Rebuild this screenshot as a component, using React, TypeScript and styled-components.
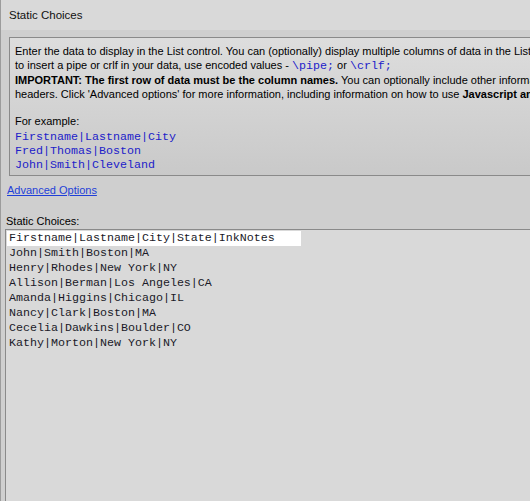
import React from 'react';
import styled, { createGlobalStyle } from 'styled-components';

const GlobalStyle = createGlobalStyle`
  html, body {
    margin: 0;
    padding: 0;
    background: #d9d9d9;
    overflow: hidden;
  }
`;

const exampleRows = ['Firstname|Lastname|City', 'Fred|Thomas|Boston', 'John|Smith|Cleveland'];

const choices = [
  'John|Smith|Boston|MA',
  'Henry|Rhodes|New York|NY',
  'Allison|Berman|Los Angeles|CA',
  'Amanda|Higgins|Chicago|IL',
  'Nancy|Clark|Boston|MA',
  'Cecelia|Dawkins|Boulder|CO',
  'Kathy|Morton|New York|NY',
];

export default function App() {
  return (
    <>
      <GlobalStyle />
      <Frame>
        <TitleBar>Static Choices</TitleBar>
        <Body>
          <InfoBox>
            <Line>
              Enter the data to display in the List control. You can (optionally) display multiple
              columns of data in the List. If you need
            </Line>
            <Line>
              to insert a pipe or crlf in your data, use encoded values - <Code>\pipe;</Code> or{' '}
              <Code>\crlf;</Code>
            </Line>
            <Important>
              <Line>
                <b>IMPORTANT: The first row of data must be the column names.</b> You can optionally
                include other information in the column
              </Line>
              <Line>
                headers. Click 'Advanced options' for more information, including information on how to
                use <b>Javascript and</b>
              </Line>
            </Important>
            <Spacer />
            <Line>For example:</Line>
            <ExampleList>
              {exampleRows.map((row) => (
                <CodeLine key={row}>{row}</CodeLine>
              ))}
            </ExampleList>
          </InfoBox>

          <Link href="#">Advanced Options</Link>
          <Label>Static Choices:</Label>

          <Editor>
            <EditorLine current>Firstname|Lastname|City|State|InkNotes</EditorLine>
            {choices.map((row) => (
              <EditorLine key={row}>{row}</EditorLine>
            ))}
          </Editor>
        </Body>
      </Frame>
    </>
  );
}

const Frame = styled.div`
  display: flex;
  flex-direction: column;
  width: 529px;
  height: 501px;
  border-left: 1px solid #9c9c9c;
  overflow: hidden;
  font-family: 'Liberation Sans', Arial, sans-serif;
  font-size: 11px;
  color: #000;
`;

const TitleBar = styled.div`
  display: flex;
  align-items: center;
  height: 30px;
  flex: none;
  padding-left: 8px;
  background: #d9d9d9;
  font-size: 11.5px;
  color: #111;
`;

const Body = styled.div`
  display: flex;
  flex-direction: column;
  flex: 1;
  min-height: 0;
  padding: 7px 0 0 4px;
  background: #cfcfcf;
`;

const InfoBox = styled.div`
  width: 680px;
  height: 139px;
  box-sizing: border-box;
  margin-left: 4px;
  padding: 6px 5px 0;
  border: 1px solid #8a8a8a;
  background: linear-gradient(#dddddd, #c9c9c9);
  white-space: nowrap;
`;

const Line = styled.div`
  height: 14px;
  line-height: 14px;
`;

const Important = styled.div`
  margin-top: 1px;
  & > ${Line} {
    height: 13.5px;
  }
`;

const Spacer = styled.div`
  height: 14px;
`;

const ExampleList = styled.div`
  margin-top: 2px;
`;

const Code = styled.span`
  font-family: 'Liberation Mono', 'Courier New', monospace;
  font-size: 11.67px;
  color: #2121c9;
`;

const CodeLine = styled(Line)`
  font-family: 'Liberation Mono', 'Courier New', monospace;
  font-size: 11.67px;
  color: #2121c9;
`;

const Link = styled.a`
  display: block;
  margin: 7px 0 0 2px;
  height: 14px;
  line-height: 14px;
  font-size: 11px;
  color: #1f3fd8;
  text-decoration: underline;
`;

const Label = styled.div`
  margin: 17px 0 0 1px;
  height: 14px;
  line-height: 14px;
  font-size: 11px;
`;

const Editor = styled.div`
  flex: 1;
  width: 700px;
  margin-top: 1px;
  padding: 1px 0 0 1px;
  border-top: 1px solid #8a8a8a;
  border-left: 1px solid #8a8a8a;
  background: #d9d9d9;
  font-family: 'Liberation Mono', 'Courier New', monospace;
  font-size: 11.67px;
  color: #1a1a28;
`;

const EditorLine = styled.div<{ current?: boolean }>`
  width: 292px;
  height: 15px;
  line-height: 15px;
  padding-left: 2px;
  background: ${({ current }) => (current ? '#ffffff' : 'transparent')};
`;
